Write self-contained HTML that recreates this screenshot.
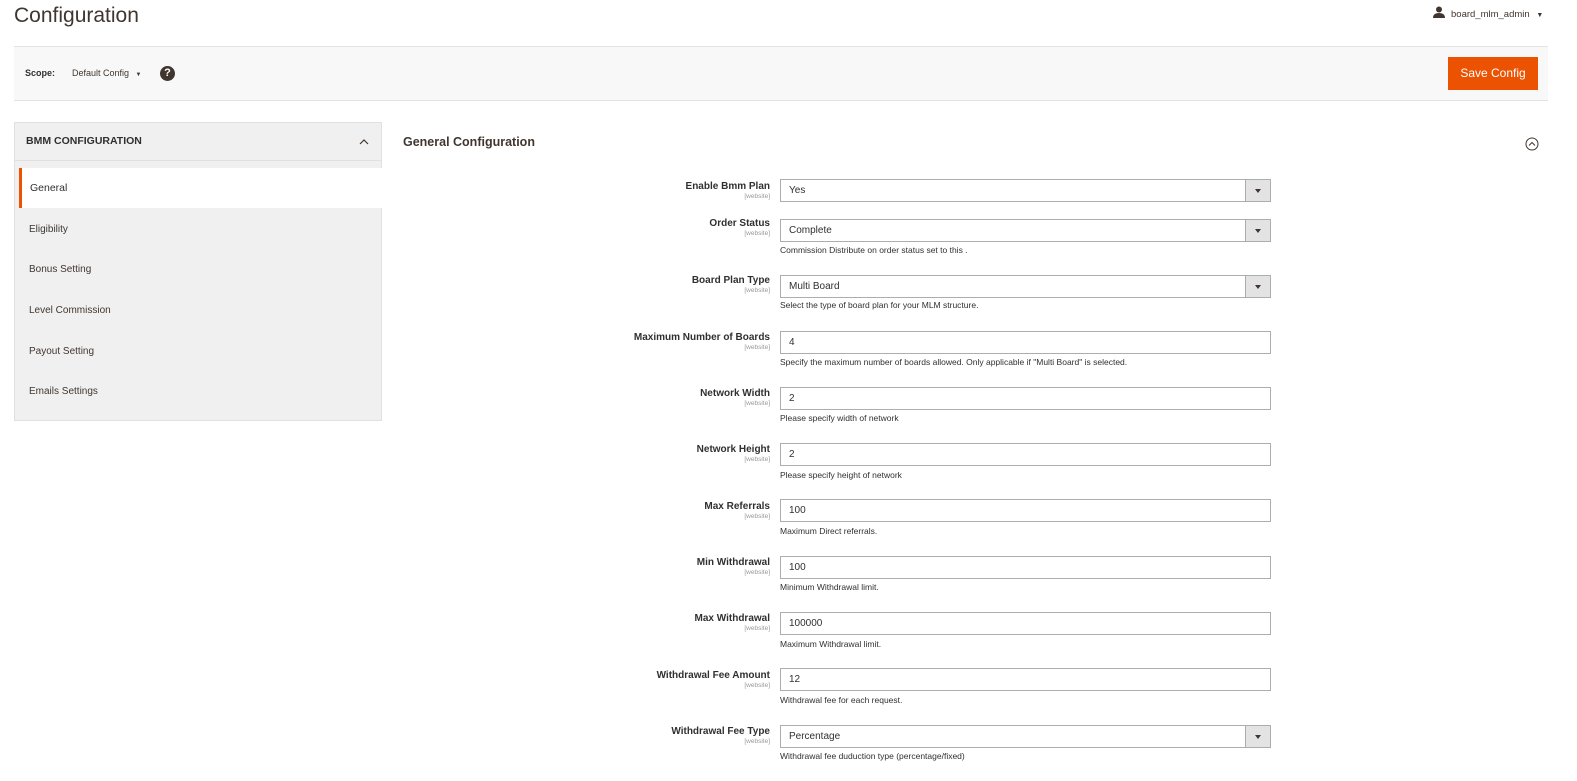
<!DOCTYPE html>
<html><head><meta charset="utf-8"><style>
*{box-sizing:border-box;margin:0;padding:0}
body{width:1577px;height:781px;background:#fff;font-family:"Liberation Sans",sans-serif;color:#303030;position:relative;overflow:hidden}
.a{position:absolute}
h1{position:absolute;left:14px;top:4px;font-size:21px;font-weight:normal;color:#41362f}
.user{left:1433px;top:6px;font-size:9.5px;color:#41362f}
.bar{left:14px;top:46px;width:1534px;height:55px;background:#f8f8f8;border-top:1px solid #e3e3e3;border-bottom:1px solid #e3e3e3}
.btn{left:1448px;top:57px;width:90px;height:33px;background:#eb5202;color:#fff;font-size:12px;text-align:center;line-height:33px}
.side{left:14px;top:122px;width:368px;height:299px;background:#f0f0f0;border:1px solid #e0e0e0}
.sh{left:14px;top:122px;width:368px;height:39px;border-bottom:1px solid #e0e0e0;font-weight:bold;font-size:10.5px;padding:13px 0 0 12px;color:#303030}
.gen{left:19px;top:168px;width:363px;height:40px;background:#fff;border-left:3px solid #eb5202;font-size:10.5px;padding:14px 0 0 8px}
.it{left:29px;font-size:10px;color:#41362f}
.sec{left:403px;top:135px;font-size:12.5px;font-weight:bold;color:#41362f}
.lbl{width:400px;left:370px;text-align:right;font-size:10px;font-weight:bold;color:#303030}
.lbl small{display:block;font-size:6.5px;font-weight:normal;color:#999;margin-top:1px}
.in{left:780px;width:491px;height:23px;border:1px solid #adadad;font-size:10px;padding:5px 0 0 8px;color:#303030;background:#fff}
.ar{position:absolute;right:0;top:0;width:25px;height:21px;background:#e3e3e3;border-left:1px solid #adadad}
.ar:after{content:"";position:absolute;left:9px;top:9px;border-left:3px solid transparent;border-right:3px solid transparent;border-top:4px solid #41362f}
.nt{left:780px;font-size:8.5px;color:#303030}
</style></head><body>
<h1>Configuration</h1>
<div class="a user"><svg width="12" height="12" viewBox="0 0 12 12" style="vertical-align:-1px;margin-right:6px"><circle cx="6" cy="3.5" r="3" fill="#41362f"/><path d="M0 12 Q0 7 6 7 Q12 7 12 12Z" fill="#41362f"/></svg>board_mlm_admin <span style="font-size:7px;margin-left:4px">▼</span></div>
<div class="a bar"></div>
<div class="a" style="left:25px;top:68px;font-size:9px;font-weight:bold">Scope:</div>
<div class="a" style="left:72px;top:68px;font-size:9px;color:#41362f">Default Config <span style="font-size:6px;margin-left:4px">▼</span></div>
<div class="a" style="left:160px;top:66px;width:15px;height:15px;border-radius:50%;background:#41362f;color:#fff;font-size:11px;font-weight:bold;text-align:center;line-height:15px">?</div>
<div class="a btn">Save Config</div>
<div class="a side"></div>
<div class="a sh">BMM CONFIGURATION</div>
<svg class="a" style="left:359px;top:138px" width="10" height="7" viewBox="0 0 10 7"><path d="M1 6 L5 2 L9 6" stroke="#41362f" fill="none" stroke-width="1.2"/></svg>
<div class="a gen">General</div>
<div class="a it" style="top:224px">Eligibility</div>
<div class="a it" style="top:264px">Bonus Setting</div>
<div class="a it" style="top:305px">Level Commission</div>
<div class="a it" style="top:346px">Payout Setting</div>
<div class="a it" style="top:386px">Emails Settings</div>
<div class="a sec">General Configuration</div>
<svg class="a" style="left:1525px;top:137px" width="14" height="14" viewBox="0 0 14 14"><circle cx="7" cy="7" r="6" stroke="#41362f" fill="none"/><path d="M4 8.5 L7 5.5 L10 8.5" stroke="#41362f" fill="none"/></svg>

<div class="a lbl" style="top:181px">Enable Bmm Plan<small>[website]</small></div>
<div class="a in" style="top:179px">Yes<span class="ar"></span></div>

<div class="a lbl" style="top:218px">Order Status<small>[website]</small></div>
<div class="a in" style="top:219px">Complete<span class="ar"></span></div>
<div class="a nt" style="top:245px">Commission Distribute on order status set to this .</div>

<div class="a lbl" style="top:275px">Board Plan Type<small>[website]</small></div>
<div class="a in" style="top:275px">Multi Board<span class="ar"></span></div>
<div class="a nt" style="top:300px">Select the type of board plan for your MLM structure.</div>

<div class="a lbl" style="top:332px">Maximum Number of Boards<small>[website]</small></div>
<div class="a in" style="top:331px">4</div>
<div class="a nt" style="top:357px">Specify the maximum number of boards allowed. Only applicable if "Multi Board" is selected.</div>

<div class="a lbl" style="top:388px">Network Width<small>[website]</small></div>
<div class="a in" style="top:387px">2</div>
<div class="a nt" style="top:413px">Please specify width of network</div>

<div class="a lbl" style="top:444px">Network Height<small>[website]</small></div>
<div class="a in" style="top:443px">2</div>
<div class="a nt" style="top:470px">Please specify height of network</div>

<div class="a lbl" style="top:501px">Max Referrals<small>[website]</small></div>
<div class="a in" style="top:499px">100</div>
<div class="a nt" style="top:526px">Maximum Direct referrals.</div>

<div class="a lbl" style="top:557px">Min Withdrawal<small>[website]</small></div>
<div class="a in" style="top:556px">100</div>
<div class="a nt" style="top:582px">Minimum Withdrawal limit.</div>

<div class="a lbl" style="top:613px">Max Withdrawal<small>[website]</small></div>
<div class="a in" style="top:612px">100000</div>
<div class="a nt" style="top:639px">Maximum Withdrawal limit.</div>

<div class="a lbl" style="top:670px">Withdrawal Fee Amount<small>[website]</small></div>
<div class="a in" style="top:668px">12</div>
<div class="a nt" style="top:695px">Withdrawal fee for each request.</div>

<div class="a lbl" style="top:726px">Withdrawal Fee Type<small>[website]</small></div>
<div class="a in" style="top:725px">Percentage<span class="ar"></span></div>
<div class="a nt" style="top:751px">Withdrawal fee duduction type (percentage/fixed)</div>
</body></html>
